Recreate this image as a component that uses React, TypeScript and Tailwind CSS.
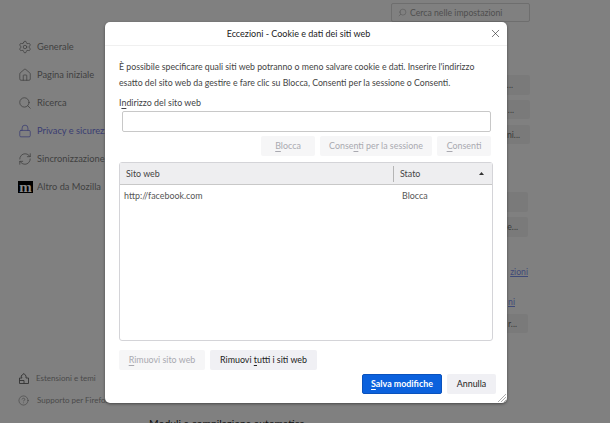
import { Settings, Home, Search, Lock, RefreshCw, HelpCircle, X } from "lucide-react";

const navItems = [
  { label: "Generale", Icon: Settings, color: "text-[#404040]" },
  { label: "Pagina iniziale", Icon: Home, color: "text-[#404040]" },
  { label: "Ricerca", Icon: Search, color: "text-[#404040]" },
  { label: "Privacy e sicurezza", Icon: Lock, color: "text-[#3a3d72]" },
  { label: "Sincronizzazione", Icon: RefreshCw, color: "text-[#404040]" },
];

function U({ children }: { children: string }) {
  return <span className="underline underline-offset-2">{children}</span>;
}

export default function App() {
  return (
    <div className="relative h-[423px] w-[610px] overflow-hidden bg-[#808080] font-['Lato',sans-serif] text-[#3a3a3a]">
      <div className="flex h-full">
        <aside className="flex h-full w-[149px] shrink-0 flex-col pl-[18px] pt-[33px]">
          {navItems.map(({ label, Icon, color }) => (
            <div key={label} className={`flex h-[28px] items-center gap-[5px] whitespace-nowrap text-[9.3px] ${color}`}>
              <Icon size={14} strokeWidth={1.3} />
              <span>{label}</span>
            </div>
          ))}
          <div className="flex h-[28px] items-center gap-[4px] whitespace-nowrap text-[9.3px] text-[#404040]">
            <span className="flex h-[12px] w-[15px] items-center justify-center overflow-hidden bg-black font-['Liberation_Serif',serif] text-[15px] font-bold leading-[12px] text-[#8a8a8a]">m</span>
            <span>Altro da Mozilla</span>
          </div>
          <div className="mt-auto flex flex-col pb-[12px] text-[8px] text-[#4a4a4a]">
            <div className="flex h-[22px] items-center gap-[7px] whitespace-nowrap">
              <svg className="ml-[1px]" width="10" height="11" viewBox="0 0 10 11" fill="none" stroke="#333" strokeWidth="0.9">
                <path d="M0.5 5h2.5L2 3l3-2.5L7 3v2h2.5v5.5h-9z" />
                <path d="M0.5 7.5h4.5v3" />
              </svg>
              <span>Estensioni e temi</span>
            </div>
            <div className="flex h-[22px] items-center gap-[8px] whitespace-nowrap">
              <HelpCircle size={11} strokeWidth={1} className="text-[#333]" />
              <span>Supporto per Firefox</span>
            </div>
          </div>
        </aside>
        <main className="flex w-[381px] flex-col items-end pt-[3px] text-[8.7px]">
          <div className="flex h-[19px] w-[139px] items-center gap-[3px] rounded-[2px] border border-[#6e6e6e] px-[6px] text-[#4f4f4f]">
            <Search size={9} strokeWidth={1.2} className="-scale-x-100" />
            <span>Cerca nelle impostazioni</span>
          </div>
          <div className="mt-[53px] flex h-[20px] w-[60px] items-center justify-end rounded-[2px] bg-[#7a7a7a] pr-[17px]">...</div>
          <div className="mt-[5px] flex h-[19px] w-[60px] items-center justify-end rounded-[2px] bg-[#7a7a7a] pr-[16px]">...</div>
          <div className="mt-[6px] flex h-[19px] w-[60px] items-center justify-end rounded-[2px] bg-[#7a7a7a] pr-[10px]">ni...</div>
          <div className="mr-[2px] mt-[48px] h-[20px] w-[60px] rounded-[2px] bg-[#7a7a7a]" />
          <div className="mr-[2px] mt-[5px] flex h-[20px] w-[60px] items-center justify-end rounded-[2px] bg-[#7a7a7a] pr-[10px]">e...</div>
          <div className="mr-[2px] mt-[28px] leading-[14px] text-[#3f4a78] underline">zioni</div>
          <div className="mr-[15px] mt-[16px] leading-[14px] text-[#3f4a78] underline">ni</div>
          <div className="mr-[2px] mt-[5px] flex h-[19px] w-[60px] items-center justify-end rounded-[2px] bg-[#7a7a7a] pr-[11px]">r...</div>
          <div className="mt-auto translate-y-[6px] self-start whitespace-nowrap text-[10.4px] leading-[11px] text-[#111]">Moduli e compilazione automatica</div>
        </main>
      </div>

      <div className="absolute left-[105px] top-[22px] flex h-[381px] w-[402px] flex-col overflow-hidden rounded-[5px] bg-white text-[8.9px] text-[#3f3f46] shadow-[0_1px_3px_rgba(0,0,0,0.45)]">
        <header className="relative flex h-[24px] shrink-0 items-center justify-center border-b border-[#f0f0f0] pr-[15px] text-[9px] text-[#222]">
          <span>Eccezioni - Cookie e dati dei siti web</span>
          <X size={13} strokeWidth={1.1} className="absolute right-[5px] top-[5px]" />
        </header>
        <div className="flex flex-1 flex-col px-[14px]">
          <p className="mt-[13px] whitespace-nowrap text-[8.75px] leading-[16px] text-[#444]">
            È possibile specificare quali siti web potranno o meno salvare cookie e dati. Inserire l'indirizzo<br />
            esatto del sito web da gestire e fare clic su Blocca, Consenti per la sessione o Consenti.
          </p>
          <label className="mt-[5px] block leading-[14px]">I<U>n</U>dirizzo del sito web</label>
          <div className="ml-[3px] mt-[1px] h-[21px] w-[369px] rounded-[2px] border border-[#c8c8c8]" />
          <div className="mt-[4px] flex justify-end gap-[5px] pr-[2px] text-[#a9a9b0]">
            <button className="h-[20px] w-[54px] rounded-[2px] bg-[#f6f6f7]"><U>B</U>locca</button>
            <button className="h-[20px] w-[112px] rounded-[2px] bg-[#f6f6f7]">Conse<U>n</U>ti per la sessione</button>
            <button className="h-[20px] w-[54px] rounded-[2px] bg-[#f6f6f7]"><U>C</U>onsenti</button>
          </div>
          <div className="mt-[6px] flex h-[179px] w-[374px] flex-col rounded-[3px] border border-[#d4d4d8]">
            <div className="flex h-[22px] shrink-0 items-center border-b border-[#c8c8c8] bg-[#eeeef0] text-[#444]">
              <div className="w-[273px] pl-[6px]">Sito web</div>
              <div className="flex h-[16px] flex-1 items-center justify-between border-l border-[#b5b5b5] pl-[6px] pr-[8px]">
                <span>Stato</span>
                <svg width="5" height="3" viewBox="0 0 5 3" fill="#333"><path d="M2.5 0L5 3H0z" /></svg>
              </div>
            </div>
            <div className="flex h-[21px] items-center text-[#555]">
              <div className="w-[282px] pl-[4px]">http://facebook.com</div>
              <div>Blocca</div>
            </div>
          </div>
          <div className="mt-[9px] flex gap-[5px]">
            <button className="h-[20px] w-[86px] rounded-[2px] bg-[#f6f6f7] text-[#a9a9b0]"><U>R</U>imuovi sito web</button>
            <button className="h-[20px] w-[107px] rounded-[2px] bg-[#f0f0f4] text-[#222]">Rimuovi <U>t</U>utti i siti web</button>
          </div>
          <div className="mr-[-3px] mt-[4px] flex justify-end gap-[5px]">
            <button className="h-[20px] w-[80px] rounded-[2px] border border-[#0a52bd] bg-[#0b61dd] font-bold text-white"><U>S</U>alva modifiche</button>
            <button className="h-[20px] w-[49px] rounded-[2px] bg-[#f0f0f4] text-[#222]">Annulla</button>
          </div>
        </div>
        <svg className="absolute bottom-[1px] right-[1px]" width="9" height="9" viewBox="0 0 9 9" stroke="#8a8a8a" strokeWidth="0.7">
          <path d="M1 9L9 1M4 9L9 4M7 9L9 7" />
        </svg>
      </div>
    </div>
  );
}
